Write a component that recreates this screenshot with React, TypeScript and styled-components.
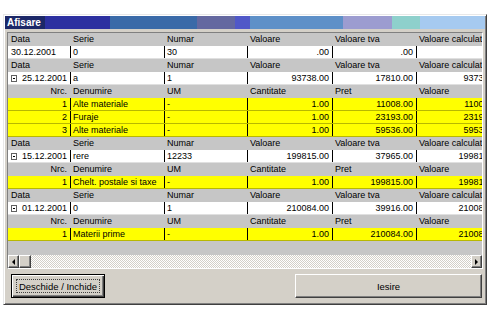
import React from "react";
import styled, { createGlobalStyle } from "styled-components";

const Global = createGlobalStyle`
  html, body {
    margin: 0;
    padding: 0;
    background: #ffffff;
  }
  body {
    font-family: "Liberation Sans", Arial, sans-serif;
  }
`;

const Window = styled.div`
  box-sizing: border-box;
  margin: 14px 0 0 3px;
  width: 484px;
  height: 291px;
  background: #d4d0c8;
  border-top: 1px solid #e8e8e8;
  border-left: 1px solid #e8e8e8;
  border-right: 1px solid #404040;
  border-bottom: 1px solid #404040;
  box-shadow: inset 1px 1px #ffffff, inset -1px -1px #808080;
  padding: 1px;
  display: flex;
  flex-direction: column;
`;

const TitleBar = styled.div`
  height: 13px;
  display: flex;
  align-items: center;
  padding-left: 2px;
  color: #ffffff;
  font-size: 10px;
  font-weight: bold;
  background: linear-gradient(
    to right,
    #1c2868 0px,
    #1c2868 40px,
    #2c30a0 40px,
    #2c30a0 105px,
    #3a6aa8 105px,
    #3a6aa8 192px,
    #6468a0 192px,
    #6468a0 230px,
    #5058c8 230px,
    #5058c8 245px,
    #5e90c8 245px,
    #5e90c8 338px,
    #9c9cd0 338px,
    #9c9cd0 387px,
    #8ed0cc 387px,
    #8ed0cc 415px,
    #a6caf0 415px
  );
`;

const Body = styled.div`
  flex: 1;
  display: flex;
  flex-direction: column;
  padding: 3px 1px 0 2px;
`;

const GridFrame = styled.div`
  box-sizing: border-box;
  width: 476px;
  height: 237px;
  border: 1px solid;
  border-color: #808080 #ffffff #ffffff #808080;
  background: #c6c6c6;
  display: flex;
  flex-direction: column;
  overflow: hidden;
`;

const Rows = styled.div`
  flex: 1;
  overflow: hidden;
`;

type Kind = "head" | "master" | "sub" | "detail";

const rowBg: Record<Kind, string> = {
  head: "#c6c6c6",
  master: "#ffffff",
  sub: "#c6c6c6",
  detail: "#ffff00",
};

const Row = styled.div<{ $kind: Kind }>`
  display: flex;
  height: 13px;
  box-sizing: border-box;
  background: ${(p) => rowBg[p.$kind]};
  border-bottom: 1px solid
    ${(p) =>
      p.$kind === "detail"
        ? "#b8b800"
        : p.$kind === "master"
        ? "#e0e0e0"
        : "#c6c6c6"};
`;

const Cell = styled.div<{ $w: number; $right: boolean; $line: boolean }>`
  box-sizing: border-box;
  flex: 0 0 ${(p) => p.$w}px;
  width: ${(p) => p.$w}px;
  font-size: 9px;
  line-height: 12px;
  color: #000000;
  white-space: nowrap;
  overflow: hidden;
  text-align: ${(p) => (p.$right ? "right" : "left")};
  padding: 0 3px 0 2px;
  border-left: 1px solid ${(p) => (p.$line ? "#000000" : "transparent")};
  display: flex;
  align-items: center;
  justify-content: ${(p) => (p.$right ? "flex-end" : "flex-start")};
  &:first-child {
    border-left: none;
    padding-left: 3px;
  }
`;

const ExpandBox = styled.span`
  display: inline-block;
  box-sizing: border-box;
  width: 7px;
  height: 7px;
  border: 1px solid #606060;
  margin-right: 5px;
  position: relative;
  &::after {
    content: "";
    position: absolute;
    left: 1px;
    right: 1px;
    top: 2px;
    height: 1px;
    background: #000000;
  }
`;

const ScrollBar = styled.div`
  height: 13px;
  display: flex;
  background-color: #ffffff;
  background-image: conic-gradient(
    #d4d0c8 25%,
    #ffffff 0 50%,
    #d4d0c8 0 75%,
    #ffffff 0
  );
  background-size: 2px 2px;
`;

const ScrollBtn = styled.div<{ $wide?: boolean }>`
  box-sizing: border-box;
  width: ${(p) => (p.$wide ? 12 : 11)}px;
  height: 13px;
  background: #d4d0c8;
  border-top: 1px solid #ffffff;
  border-left: 1px solid #ffffff;
  border-right: 1px solid #404040;
  border-bottom: 1px solid #404040;
  box-shadow: inset -1px -1px #808080;
  display: flex;
  align-items: center;
  justify-content: center;
`;

const Arrow = styled.span<{ $dir: "left" | "right" }>`
  width: 0;
  height: 0;
  border-top: 3px solid transparent;
  border-bottom: 3px solid transparent;
  ${(p) =>
    p.$dir === "left"
      ? "border-right: 3px solid #000;"
      : "border-left: 3px solid #000;"}
`;

const Track = styled.div`
  flex: 1;
`;

const Buttons = styled.div`
  display: flex;
  justify-content: space-between;
  padding: 5px 2px 0 4px;
`;

const Button = styled.button<{ $w: number; $default?: boolean }>`
  box-sizing: border-box;
  width: ${(p) => p.$w}px;
  height: 24px;
  background: #d4d0c8;
  font-family: "Liberation Sans", Arial, sans-serif;
  font-size: 9.5px;
  color: #000000;
  padding: 0;
  border: 1px solid ${(p) => (p.$default ? "#000000" : "#ffffff")};
  ${(p) =>
    p.$default
      ? "box-shadow: inset 1px 1px #ffffff, inset -1px -1px #404040, inset -2px -2px #808080;"
      : "border-right-color: #404040; border-bottom-color: #404040; box-shadow: inset -1px -1px #808080;"}
  display: flex;
  align-items: center;
  justify-content: center;
`;

const FocusRect = styled.span`
  box-sizing: border-box;
  width: calc(100% - 8px);
  height: calc(100% - 8px);
  border: 1px dotted #404040;
  display: flex;
  align-items: center;
  justify-content: center;
`;

const widths = [62, 94, 83, 85, 84, 88];

type RowData = { kind: Kind; cells: string[]; expand?: boolean };

const masterHead = ["Data", "Serie", "Numar", "Valoare", "Valoare tva", "Valoare calculat"];
const detailHead = ["Nrc.", "Denumire", "UM", "Cantitate", "Pret", "Valoare"];

const rows: RowData[] = [
  { kind: "head", cells: masterHead },
  { kind: "master", cells: ["30.12.2001", "0", "30", ".00", ".00", ""] },
  { kind: "head", cells: masterHead },
  { kind: "master", expand: true, cells: ["25.12.2001", "a", "1", "93738.00", "17810.00", "93738.00"] },
  { kind: "sub", cells: detailHead },
  { kind: "detail", cells: ["1", "Alte materiale", "-", "1.00", "11008.00", "11008.00"] },
  { kind: "detail", cells: ["2", "Furaje", "-", "1.00", "23193.00", "23193.00"] },
  { kind: "detail", cells: ["3", "Alte materiale", "-", "1.00", "59536.00", "59536.00"] },
  { kind: "head", cells: masterHead },
  { kind: "master", expand: true, cells: ["15.12.2001", "rere", "12233", "199815.00", "37965.00", "199815.00"] },
  { kind: "sub", cells: detailHead },
  { kind: "detail", cells: ["1", "Chelt. postale si taxe", "-", "1.00", "199815.00", "199815.00"] },
  { kind: "head", cells: masterHead },
  { kind: "master", expand: true, cells: ["01.12.2001", "0", "1", "210084.00", "39916.00", "210084.00"] },
  { kind: "sub", cells: detailHead },
  { kind: "detail", cells: ["1", "Materii prime", "-", "1.00", "210084.00", "210084.00"] },
];

const alignRight = (kind: Kind, i: number) => {
  if (kind === "head") return false;
  if (kind === "sub") return i === 0;
  if (kind === "detail") return i === 0 || i >= 3;
  return i >= 3;
};

export default function App() {
  return (
    <>
      <Global />
      <Window>
        <TitleBar>Afisare</TitleBar>
        <Body>
          <GridFrame>
            <Rows>
              {rows.map((row, r) => (
                <Row key={r} $kind={row.kind}>
                  {row.cells.map((text, i) => (
                    <Cell
                      key={i}
                      $w={widths[i]}
                      $right={alignRight(row.kind, i)}
                      $line={row.kind === "master" || row.kind === "detail"}
                    >
                      {i === 0 && row.expand && <ExpandBox />}
                      {text}
                    </Cell>
                  ))}
                </Row>
              ))}
            </Rows>
            <ScrollBar>
              <ScrollBtn>
                <Arrow $dir="left" />
              </ScrollBtn>
              <ScrollBtn $wide />
              <Track />
              <ScrollBtn>
                <Arrow $dir="right" />
              </ScrollBtn>
            </ScrollBar>
          </GridFrame>
          <Buttons>
            <Button $w={94} $default>
              <FocusRect>Deschide / Inchide</FocusRect>
            </Button>
            <Button $w={187}>Iesire</Button>
          </Buttons>
        </Body>
      </Window>
    </>
  );
}
